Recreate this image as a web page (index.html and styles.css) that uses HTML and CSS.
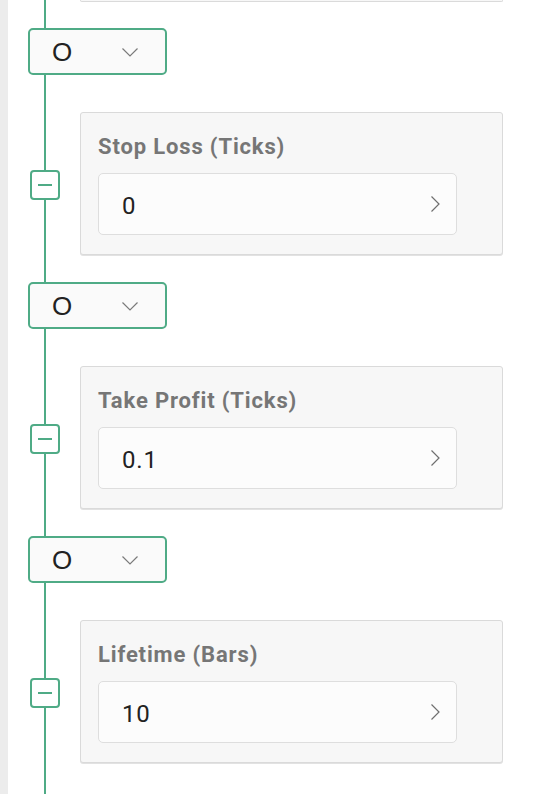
FILE: index.html
```html
<!DOCTYPE html>
<html>
<head>
<meta charset="utf-8">
<link rel="stylesheet" href="styles.css">
</head>
<body>
<div class="page">
  <div class="strip"></div>
  <div class="timeline">
    <div class="stub"></div>

    <div class="dropdown">
      <span class="dd-value">O</span>
      <svg class="dd-chev" width="16" height="9" viewBox="0 0 16 9"><path d="M0.5 0.5 L8 8 L15.5 0.5" fill="none" stroke="#7a7a7a" stroke-width="1.2"/></svg>
    </div>
    <div class="row">
      <div class="rail"><div class="minus"><span></span></div></div>
      <div class="card">
        <div class="title">Stop Loss (Ticks)</div>
        <div class="input">
          <span class="value">0</span>
          <svg class="in-chev" width="9" height="16" viewBox="0 0 9 16"><path d="M0.5 0.5 L8 8 L0.5 15.5" fill="none" stroke="#6f6f6f" stroke-width="1.2"/></svg>
        </div>
      </div>
    </div>

    <div class="dropdown">
      <span class="dd-value">O</span>
      <svg class="dd-chev" width="16" height="9" viewBox="0 0 16 9"><path d="M0.5 0.5 L8 8 L15.5 0.5" fill="none" stroke="#7a7a7a" stroke-width="1.2"/></svg>
    </div>
    <div class="row">
      <div class="rail"><div class="minus"><span></span></div></div>
      <div class="card">
        <div class="title">Take Profit (Ticks)</div>
        <div class="input">
          <span class="value">0.1</span>
          <svg class="in-chev" width="9" height="16" viewBox="0 0 9 16"><path d="M0.5 0.5 L8 8 L0.5 15.5" fill="none" stroke="#6f6f6f" stroke-width="1.2"/></svg>
        </div>
      </div>
    </div>

    <div class="dropdown">
      <span class="dd-value">O</span>
      <svg class="dd-chev" width="16" height="9" viewBox="0 0 16 9"><path d="M0.5 0.5 L8 8 L15.5 0.5" fill="none" stroke="#7a7a7a" stroke-width="1.2"/></svg>
    </div>
    <div class="row">
      <div class="rail"><div class="minus"><span></span></div></div>
      <div class="card">
        <div class="title">Lifetime (Bars)</div>
        <div class="input">
          <span class="value">10</span>
          <svg class="in-chev" width="9" height="16" viewBox="0 0 9 16"><path d="M0.5 0.5 L8 8 L0.5 15.5" fill="none" stroke="#6f6f6f" stroke-width="1.2"/></svg>
        </div>
      </div>
    </div>
  </div>
</div>
</body>
</html>
```

FILE: styles.css
```css
* { box-sizing: border-box; }
html, body { margin: 0; padding: 0; background: #ffffff; }
body { font-family: Roboto, "Liberation Sans", sans-serif; }

.page {
  display: flex;
  min-height: 794px;
  height: 794px;
  overflow: hidden;
}

.strip {
  width: 8px;
  flex: 0 0 8px;
  background: #ececec;
}

.timeline {
  flex: 1;
  position: relative;
  padding-left: 20px;
  display: flex;
  flex-direction: column;
  align-items: flex-start;
}

.timeline::before {
  content: "";
  position: absolute;
  left: 36px;
  top: 0;
  bottom: 0;
  width: 2px;
  background: #4fab86;
}

.stub {
  margin-left: 52px;
  width: 423px;
  height: 2px;
  background: #f7f7f7;
  border: 1px solid #dadada;
  border-top: none;
  border-radius: 0 0 3px 3px;
}

.dropdown {
  position: relative;
  margin-top: 26px;
  width: 139px;
  height: 47px;
  border: 2px solid #4fab86;
  border-radius: 5px;
  background: #fafafa;
  display: flex;
  align-items: center;
  padding-left: 22px;
}

.dd-value {
  font-family: "Liberation Sans", Arial, sans-serif;
  font-size: 26px;
  color: #222;
  line-height: 1;
}

.dd-chev {
  margin-left: auto;
  margin-right: 27px;
  margin-top: 2px;
}

.row {
  margin-top: 37px;
  display: flex;
  align-items: center;
}

.rail {
  width: 52px;
  flex: 0 0 52px;
  position: relative;
}

.minus {
  margin-left: 2px;
  margin-top: 3px;
  width: 30px;
  height: 30px;
  border: 2px solid #4fab86;
  border-radius: 4px;
  background: #fff;
  display: flex;
  align-items: center;
  justify-content: center;
}

.minus span {
  display: block;
  width: 14px;
  height: 2px;
  background: #4fab86;
}

.card {
  width: 423px;
  height: 143px;
  background: #f7f7f7;
  border: 1px solid #dadada;
  border-radius: 3px;
  box-shadow: 0 1px 0 #e2e2e2;
  padding: 22px 17px 0 17px;
}

.title {
  font-size: 22px;
  line-height: 24px;
  font-weight: 700;
  letter-spacing: 0.85px;
  color: #767676;
}

.input {
  margin-top: 14px;
  width: 359px;
  height: 62px;
  border: 1px solid #dedede;
  border-radius: 5px;
  background: #fcfcfc;
  display: flex;
  align-items: center;
  padding-left: 23px;
  padding-top: 3px;
}

.value {
  font-size: 24px;
  letter-spacing: 0.8px;
  color: #222;
  line-height: 1;
}

.in-chev {
  margin-left: auto;
  margin-right: 16px;
  margin-top: -3px;
}

.row + .dropdown { margin-top: 27px; }
```
